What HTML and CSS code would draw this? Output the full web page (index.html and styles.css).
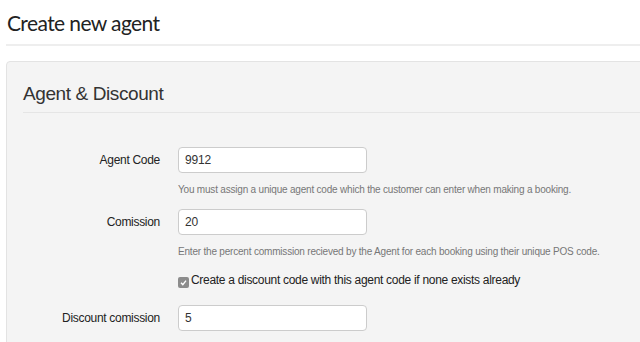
FILE: index.html
```html
<!DOCTYPE html>
<html lang="en">
<head>
  <meta charset="UTF-8">
  <title>Create new agent</title>
  <link rel="stylesheet" href="styles.css">
</head>
<body>
  <div class="page">
    <h1 class="page-title">Create new agent</h1>

    <form class="well">
      <fieldset>
        <legend>Agent &amp; Discount</legend>

        <div class="form-row">
          <label class="row-label" for="code">Agent Code</label>
          <div class="row-control">
            <input class="text-input" id="code" type="text" value="9912">
            <p class="help">You must assign a unique agent code which the customer can enter when making a booking.</p>
          </div>
        </div>

        <div class="form-row">
          <label class="row-label" for="comission">Comission</label>
          <div class="row-control">
            <input class="text-input" id="comission" type="text" value="20">
            <p class="help">Enter the percent commission recieved by the Agent for each booking using their unique POS code.</p>
            <label class="check">
              <span class="check-box">
                <svg width="9" height="9" viewBox="0 0 9 9"><path d="M2 4.8 L3.8 6.6 L7 2.6" fill="none" stroke="#fff" stroke-width="1.4"/></svg>
              </span>
              Create a discount code with this agent code if none exists already
            </label>
          </div>
        </div>

        <div class="form-row">
          <label class="row-label" for="discount">Discount comission</label>
          <div class="row-control">
            <input class="text-input" id="discount" type="text" value="5">
          </div>
        </div>
      </fieldset>
    </form>
  </div>
</body>
</html>
```

FILE: styles.css
```css
body {
  margin: 0;
  font-family: "Liberation Sans", Arial, sans-serif;
  color: #333;
  background-color: #fff;
  overflow: hidden;
}

.page {
  padding-left: 6px;
}

.page-title {
  margin: 0;
  padding: 10px 0 8px 1px;
  font-family: Lato, sans-serif;
  font-size: 21px;
  font-weight: 400;
  letter-spacing: -0.6px;
  line-height: 26px;
  color: #222;
  border-bottom: 2px solid #eee;
}

.well {
  margin-top: 15px;
  width: 700px;
  background-color: #f4f4f4;
  border: 1px solid #e3e3e3;
  border-radius: 4px;
  padding: 0 0 20px 16px;
}

fieldset {
  border: none;
  margin: 0;
  padding: 0;
}

legend {
  display: block;
  width: 100%;
  padding: 22px 0 8px;
  font-size: 19px;
  letter-spacing: -0.4px;
  line-height: 20px;
  color: #333;
  border-bottom: 1px solid #e5e5e5;
}

.form-row {
  display: grid;
  grid-template-columns: 137px 1fr;
  column-gap: 18px;
}

.form-row:first-of-type {
  margin-top: 34px;
}

.row-label {
  text-align: right;
  font-size: 12px;
  letter-spacing: -0.3px;
  line-height: 26px;
  color: #222;
}

.text-input {
  display: block;
  box-sizing: border-box;
  width: 189px;
  height: 26px;
  margin: 0;
  padding: 0 6px;
  font-family: "Liberation Sans", Arial, sans-serif;
  font-size: 12px;
  letter-spacing: -0.2px;
  color: #333;
  background-color: #fff;
  border: 1px solid #ccc;
  border-radius: 4px;
}

.help {
  margin: 10px 0 12px;
  font-size: 10px;
  letter-spacing: -0.2px;
  line-height: 14px;
  color: #777;
}

.check {
  display: flex;
  align-items: center;
  gap: 2px;
  margin: 13px 0 17px;
  font-size: 12px;
  letter-spacing: -0.3px;
  line-height: 16px;
  color: #222;
}

.check-box {
  display: flex;
  align-items: center;
  justify-content: center;
  width: 11px;
  height: 11px;
  border-radius: 2px;
  background-color: #8c8c8c;
  margin-top: 4px;
}
```
